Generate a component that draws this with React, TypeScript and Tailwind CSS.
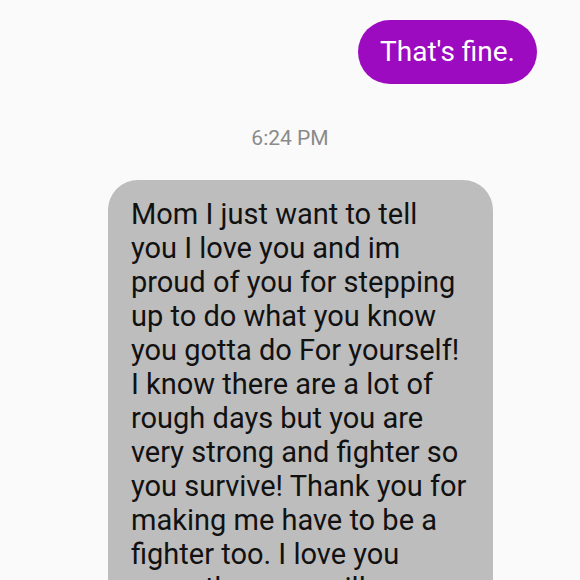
const lines = [
  'Mom I just want to tell',
  'you I love you and im',
  'proud of you for stepping',
  'up to do what you know',
  'you gotta do For yourself!',
  'I know there are a lot of',
  'rough days but you are',
  'very strong and fighter so',
  'you survive! Thank you for',
  'making me have to be a',
  'fighter too. I love you',
  'more than you will',
];

export default function App() {
  return (
    <div
      className="w-[580px] h-[580px] overflow-hidden bg-[#fafafa] flex flex-col"
      style={{ fontFamily: 'Roboto, "Noto Sans", sans-serif' }}
    >
      {/* Sent message */}
      <div className="flex justify-end pt-[20px] pr-[43px]">
        <div className="h-[64px] px-[22px] rounded-full bg-[#9c0bbf] text-white text-[28px] flex items-center">
          That's fine.
        </div>
      </div>

      {/* Timestamp */}
      <div className="mt-[39px] text-center text-[21px] text-[#8a8a8a]">6:24 PM</div>

      {/* Received message */}
      <div className="mt-[25px] pl-[108px]">
        <div className="w-[385px] rounded-[30px] bg-[#bdbdbd] pt-[17px] pb-[20px] pl-[23px] text-[29px] leading-[34px] text-[#111]">
          {lines.map((l) => (
            <div key={l} className="whitespace-nowrap">
              {l}
            </div>
          ))}
        </div>
      </div>
    </div>
  );
}
